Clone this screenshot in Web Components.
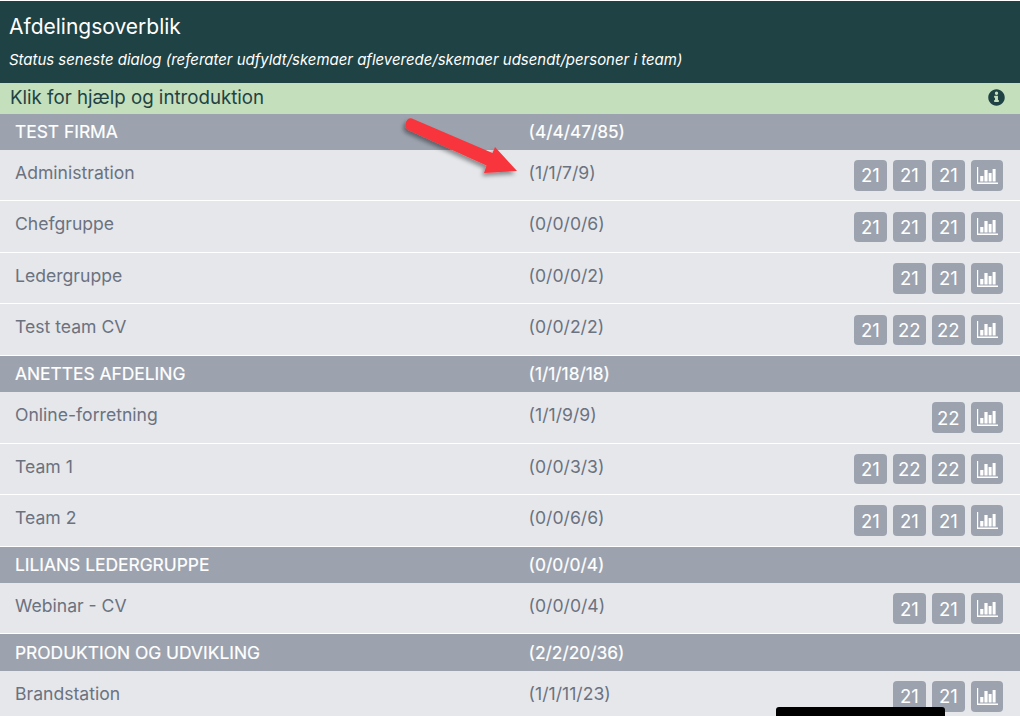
<!DOCTYPE html>
<html><head><meta charset="utf-8">
<style>
html,body{margin:0;padding:0;background:#fff;overflow:hidden;height:716px}
body{font-family:Inter,"Liberation Sans",sans-serif;position:relative}
</style></head><body>
<template id="t-page"><style>
:host{display:block;padding-top:1px;width:1020px}
header{background:#1f4244;color:#fff;height:81.9px;box-sizing:border-box;padding:14px 9px 0}
h1{margin:0;font:400 21px/24px Inter,sans-serif}
p{margin:11px 0 0;font:italic 400 14.96px/20px Inter,sans-serif}
</style><header><h1>Afdelingsoverblik</h1><p>Status seneste dialog (referater udfyldt/skemaer afleverede/skemaer udsendt/personer i team)</p></header><slot></slot></template>
<template id="t-help"><style>
:host{display:flex;align-items:center;justify-content:space-between;height:30.75px;background:#c3dfbb;color:#1f4244;font-size:18.7px;padding:0 15px 1px 10px;box-sizing:border-box}
svg{width:17px;height:17px;display:block}
</style><span><slot></slot></span><svg viewBox="0 0 512 512"><path fill="#1f4244" d="M256 8C119 8 8 119 8 256s111 248 248 248 248-111 248-248S393 8 256 8zm0 70a50 50 0 1 1 0 100 50 50 0 0 1 0-100zm72 300c0 8-6 14-14 14H198c-8 0-14-6-14-14v-30c0-8 6-14 14-14h14v-70h-14c-8 0-14-6-14-14v-30c0-8 6-14 14-14h88c8 0 14 6 14 14v114h14c8 0 14 6 14 14v30z"/></svg></template>
<template id="t-section"><style>
:host{display:grid;grid-template-columns:513.6px 1fr;align-items:center;height:var(--h,36.4px);background:#9ca3af;color:#fff;font-size:17.4px;font-weight:400;padding:0 0 .5px 15px;box-sizing:border-box;-webkit-text-stroke:.2px #fff}
</style><span><slot name="name"></slot></span><span><slot name="count"></slot></span></template>
<template id="t-row"><style>
:host{display:grid;grid-template-columns:513.6px 1fr auto;height:51.5px;background:#e5e7eb;color:#6b7280;font-size:17.6px;padding:0 17px 0 15px;box-sizing:border-box;border-bottom:1px solid #fff}
span{padding-top:11px;line-height:24px}
div{display:flex;gap:6.3px;padding-top:10.4px;height:31px}
</style><span><slot name="name"></slot></span><span><slot name="count"></slot></span><div><slot></slot></div></template>
<template id="t-chip"><style>
:host{display:flex;align-items:center;justify-content:center;width:32.7px;height:30.5px;background:#9ca3af;border-radius:4px;color:#fff;font-size:18.5px}
</style><slot></slot></template>
<template id="t-chart"><style>
:host{display:flex;align-items:center;justify-content:center;width:32px;height:30.5px;background:#9ca3af;border-radius:4px}
svg{width:21px;height:17px;display:block}
</style><svg viewBox="0 0 21 17"><path fill="#fff" d="M0 0h1.200v15.500H21V17H0z"/><rect x="3.200" y="9" width="3.200" height="5.500" fill="#fff"/><rect x="7.400" y="3" width="3.200" height="11.500" fill="#fff"/><rect x="11.600" y="6" width="3" height="8.500" fill="#fff"/><rect x="15.600" y="2" width="3" height="12.500" fill="#fff"/></svg></template>
<template id="t-arrow"><style>
:host{position:absolute;left:400px;top:114px;width:125px;height:70px;display:block}
svg{width:125px;height:70px;display:block;overflow:visible}
</style><svg viewBox="0 0 125 70"><defs><filter id="s" x="-20%" y="-20%" width="140%" height="150%"><feDropShadow dx="-2" dy="3" stdDeviation="2" flood-color="#000" flood-opacity=".4"/></filter></defs><g filter="url(#s)"><path fill="#f8363c" d="M12 4.500 L92.500 39 L95 33 L117 57 L84 59 L86.500 51.500 L8 16 Q4 13 6 8 Q8 3 12 4.500Z"/></g></svg></template>
<template id="t-bar"><style>
:host{position:absolute;left:776px;top:707px;width:169px;height:20px;background:#000;border-radius:3px 3px 0 0;display:block}
</style></template>
<script>
for (const [n,id] of [['page-shell','t-page'],['help-bar','t-help'],['section-head','t-section'],['team-row','t-row'],['year-chip','t-chip'],['chart-chip','t-chart'],['red-arrow','t-arrow'],['black-bar','t-bar']]) {
  customElements.define(n, class extends HTMLElement {
    constructor(){super();this.attachShadow({mode:'open'}).appendChild(document.getElementById(id).content.cloneNode(true));}
  });
}
const data=[
['s','TEST FIRMA','(4/4/47/85)'],
['r','Administration','(1/1/7/9)',[21,21,21]],
['r','Chefgruppe','(0/0/0/6)',[21,21,21]],
['r','Ledergruppe','(0/0/0/2)',[21,21]],
['r','Test team CV','(0/0/2/2)',[21,22,22]],
['s','ANETTES AFDELING','(1/1/18/18)'],
['r','Online-forretning','(1/1/9/9)',[22]],
['r','Team 1','(0/0/3/3)',[21,22,22]],
['r','Team 2','(0/0/6/6)',[21,21,21]],
['s','LILIANS LEDERGRUPPE','(0/0/0/4)'],
['r','Webinar - CV','(0/0/0/4)',[21,21]],
['s','PRODUKTION OG UDVIKLING','(2/2/20/36)'],
['r','Brandstation','(1/1/11/23)',[21,21]]];
const page=document.createElement('page-shell');
const help=document.createElement('help-bar');help.textContent='Klik for hjælp og introduktion';page.append(help);
const sp=(slot,t)=>{const s=document.createElement('span');s.slot=slot;s.textContent=t;return s;};
data.forEach((d,i)=>{
  const el=document.createElement(d[0]==='s'?'section-head':'team-row');
  if(i===0)el.style.setProperty('--h','36px');
  el.append(sp('name',d[1]),sp('count',d[2]));
  if(d[0]==='r'){for(const y of d[3]){const c=document.createElement('year-chip');c.textContent=y;el.append(c);}el.append(document.createElement('chart-chip'));}
  page.append(el);
});
document.body.append(page,document.createElement('red-arrow'),document.createElement('black-bar'));
</script></body></html>
